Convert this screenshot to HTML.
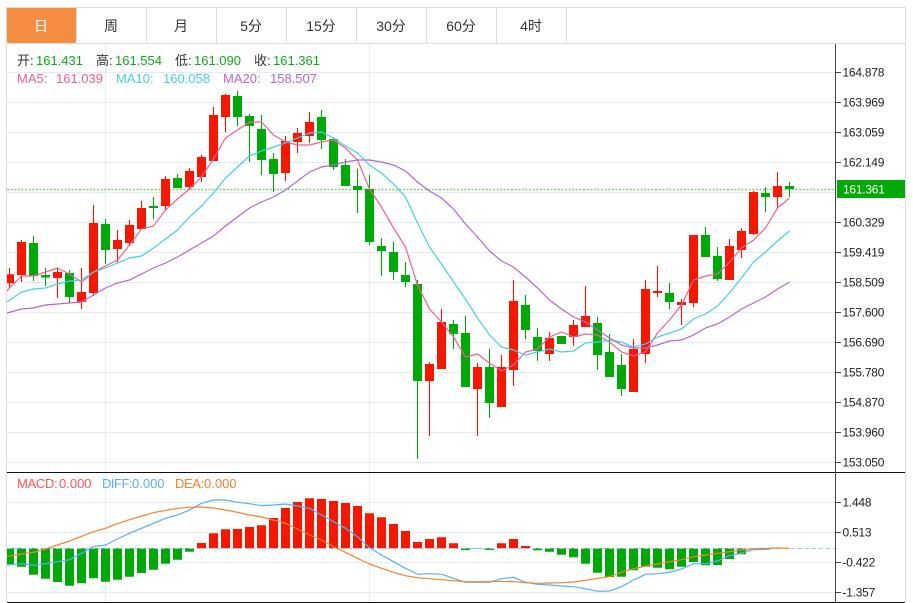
<!DOCTYPE html>
<html><head><meta charset="utf-8"><style>
html,body{margin:0;padding:0;background:#fff;width:913px;height:603px;overflow:hidden}
svg{display:block}
text{font-family:"Liberation Sans","Noto Sans CJK SC",sans-serif}
</style></head><body>
<svg width="913" height="603" viewBox="0 0 913 603" xmlns="http://www.w3.org/2000/svg">
<defs><clipPath id="c"><rect x="7" y="44" width="828" height="558"/></clipPath></defs>
<!-- frame -->
<path d="M6.5 603V7.5H905.5V603" fill="none" stroke="#ddd"/>
<path d="M7 43.5H905" stroke="#ddd"/>
<path d="M76.5 8V43M146.5 8V43M216.5 8V43M286.5 8V43M356.5 8V43M426.5 8V43M496.5 8V43M566.5 8V43" stroke="#ddd"/>
<path d="M7 8H76V41a2 2 0 0 1-2 2H9a2 2 0 0 1-2-2Z" fill="#f48d42"/>
<g font-size="14" text-anchor="middle" fill="#333">
<text x="41" y="31" fill="#fff">日</text><text x="111" y="31">周</text><text x="181" y="31">月</text><text x="251" y="31">5分</text><text x="321" y="31">15分</text><text x="391" y="31">30分</text><text x="461" y="31">60分</text><text x="531" y="31">4时</text>
</g>
<!-- grid -->
<path d="M7 72.5H835M7 102.5H835M7 132.5H835M7 162.5H835M7 192.5H835M7 222.5H835M7 252.5H835M7 282.5H835M7 312.5H835M7 342.5H835M7 372.5H835M7 402.5H835M7 432.5H835M7 462.5H835M7 502.5H835M7 532.5H835M7 562.5H835M7 592.5H835M105.5 44V472M369.5 44V472M105.5 473V602M369.5 473V602" stroke="#e3ecf3" fill="none" stroke-width="1.1"/>
<!-- last price line -->
<path d="M7 189.5H835" stroke="#75d275" stroke-width="1.4" stroke-dasharray="2 1.6"/>
<g clip-path="url(#c)">
<!-- wicks -->
<path fill="none" stroke="#e8180c" stroke-width="1.1" d="M9.5 268V288M21.5 240V282M57.5 268V298M81.5 268V309M93.5 205V296M117.5 230V263M129.5 220V246M141.5 201V229M165.5 176V210M189.5 168V190M201.5 155V182M213.5 107V161M225.5 94V132M285.5 136V181M297.5 128V153M309.5 112V143M429.5 362V436M441.5 309V369M477.5 363V436M501.5 355V407M513.5 280V386M549.5 332V361M573.5 320V346M585.5 286V327M633.5 339V392M645.5 280V363M657.5 266V297M681.5 299V325M693.5 235V307M729.5 239V280M741.5 228V258M753.5 191V235M777.5 172V207"/>
<path fill="none" stroke="#0a9c12" stroke-width="1.1" d="M33.5 236V281M45.5 268V286M69.5 270V303M105.5 219V264M153.5 197V219M177.5 174V188M237.5 91V126M249.5 114V162M261.5 115V175M273.5 153V192M321.5 110V149M333.5 137V170M345.5 159V186M357.5 169V213M369.5 175V245M381.5 238V276M393.5 242V280M405.5 262V287M417.5 280V459M453.5 320V349M465.5 316V387M489.5 349V418M525.5 295V339M537.5 328V361M597.5 317V370M609.5 334V377M621.5 354V396M669.5 283V309M705.5 227V257M717.5 247V281M765.5 187V212M789.5 182V197"/>
<!-- bodies -->
<path fill="none" stroke="#f41800" stroke-width="9" d="M9.5 274.3V283.3M21.5 242V275M57.5 272V278M81.5 292V302M93.5 223V293M117.5 240V249M129.5 225V243M141.5 208V229M165.5 179V206M189.5 171V187M201.5 157V177M213.5 115V161M225.5 95V117M285.5 141V173M297.5 133V142M309.5 122V136M429.5 364V381M441.5 322V369M477.5 367V389M501.5 367V407M513.5 301V370M549.5 338V354M573.5 325V337M585.5 316V327M633.5 349V392M645.5 289V354M657.5 291V293M681.5 302V305M693.5 235V303M729.5 246V280M741.5 231V250M753.5 192V234M777.5 186V197"/>
<path fill="none" stroke="#00a808" stroke-width="9" d="M33.5 243V276M45.5 275V277.5M69.5 273V297M105.5 224V250M153.5 206V208M177.5 178V188M237.5 96V117M249.5 116V126M261.5 129V160M273.5 159V174M321.5 117V140M333.5 139V167M345.5 165V186M357.5 186V190M369.5 189V242M381.5 246V251M393.5 252V272M405.5 275V282M417.5 284V381M453.5 324V334M465.5 333V387M489.5 367V403M525.5 305V330M537.5 337V351M561.5 336V344M597.5 323V355M609.5 352V377M621.5 365V389M669.5 293V302M705.5 235V257M717.5 256V279M765.5 193V197M789.5 186V189"/>
<!-- MA lines -->
<polyline fill="none" stroke="#f0608f" stroke-width="1.2" points="7,291 9.5,288 21.5,276 33.5,276 45.5,272 57.5,268 69.5,274 81.5,282 93.5,272 105.5,266 117.5,260 129.5,245 141.5,229 153.5,226 165.5,210 177.5,199 189.5,189 201.5,177 213.5,159 225.5,138 237.5,130 249.5,122 261.5,122 273.5,135 285.5,142 297.5,145 309.5,145 321.5,142 333.5,140 345.5,148 357.5,160 369.5,189 381.5,207 393.5,228 405.5,247 417.5,285 429.5,309 441.5,322 453.5,337 465.5,357 477.5,354 489.5,363 501.5,371 513.5,365 525.5,352 537.5,349 549.5,337 561.5,332 573.5,337 585.5,334 597.5,335 609.5,342 621.5,352 633.5,356 645.5,352 657.5,333 669.5,320 681.5,305 693.5,280 705.5,276 717.5,274 729.5,262 741.5,248 753.5,240 765.5,228 777.5,208 789.5,198"/>
<polyline fill="none" stroke="#46cfe3" stroke-width="1.2" points="7,302 21.5,292 33.5,289 45.5,288 57.5,284 69.5,281 81.5,280 93.5,272 105.5,268 117.5,263 129.5,258 141.5,256 153.5,248 165.5,239 177.5,230 189.5,217 201.5,206 213.5,193 225.5,178 237.5,167 249.5,156 261.5,151 273.5,147 285.5,143 297.5,138 309.5,133 321.5,132 333.5,138 345.5,146 357.5,153 369.5,165 381.5,173 393.5,184 405.5,197 417.5,223 429.5,247 441.5,264 453.5,282 465.5,299 477.5,318 489.5,335 501.5,347 513.5,350 525.5,355 537.5,352 549.5,349 561.5,352 573.5,351 585.5,343 597.5,342 609.5,340 621.5,342 633.5,347 645.5,344 657.5,337 669.5,333 681.5,329 693.5,319 705.5,314 717.5,306 729.5,293 741.5,278 753.5,262 765.5,252 777.5,241 789.5,231"/>
<polyline fill="none" stroke="#b766d0" stroke-width="1.2" points="7,313 21.5,309 33.5,308 45.5,305 57.5,304 69.5,303 81.5,302 93.5,295 105.5,288 117.5,283 129.5,280 141.5,274 153.5,268 165.5,263 177.5,257 189.5,250 201.5,243 213.5,236 225.5,226 237.5,217 249.5,208 261.5,202 273.5,197 285.5,190 297.5,181 309.5,172 321.5,167 333.5,165 345.5,162 357.5,160 369.5,160 381.5,162 393.5,165 405.5,171 417.5,182 429.5,191 441.5,198 453.5,209 465.5,224 477.5,237 489.5,251 501.5,261 513.5,267 525.5,277 537.5,288 549.5,300 561.5,309 573.5,317 585.5,322 597.5,330 609.5,338 621.5,345 633.5,348 645.5,348 657.5,345 669.5,341 681.5,340 693.5,335 705.5,328 717.5,324 729.5,317 741.5,309 753.5,303 765.5,297 777.5,289 789.5,282"/>
<!-- MACD bars -->
<path fill="none" stroke="#00a808" stroke-width="9" d="M9.5 548.3V564.3M21.5 548.3V566.7M33.5 548.3V574.7M45.5 548.3V578.7M57.5 548.3V582M69.5 548.3V585.7M81.5 548.3V583.3M93.5 548.3V578.3M105.5 548.3V581.7M117.5 548.3V579.7M129.5 548.3V576.7M141.5 548.3V573M153.5 548.3V569.7M165.5 548.3V563.7M177.5 548.3V559.7M189.5 548.3V551.7M465.5 548.3V550M477.5 548.3V548.8M489.5 548.3V550M537.5 548.3V550.3M549.5 548.3V551.7M561.5 548.3V554.7M573.5 548.3V557.3M585.5 548.3V563.7M597.5 548.3V572.7M609.5 548.3V577M621.5 548.3V576.7M633.5 548.3V570.3M645.5 548.3V566.7M657.5 548.3V567.7M669.5 548.3V569.3M681.5 548.3V566.7M693.5 548.3V562M705.5 548.3V565.3M717.5 548.3V565M729.5 548.3V559M741.5 548.3V554.3"/>
<path fill="none" stroke="#f41800" stroke-width="9" d="M201.5 548.3V543M213.5 548.3V533.3M225.5 548.3V529.3M237.5 548.3V529M249.5 548.3V527M261.5 548.3V525.3M273.5 548.3V518M285.5 548.3V508M297.5 548.3V502M309.5 548.3V498.3M321.5 548.3V499M333.5 548.3V501M345.5 548.3V503M357.5 548.3V506M369.5 548.3V513.3M381.5 548.3V517.3M393.5 548.3V524M405.5 548.3V531M417.5 548.3V542M429.5 548.3V539M441.5 548.3V537.3M453.5 548.3V543.3M501.5 548.3V543.3M513.5 548.3V539M525.5 548.3V546"/>
<path d="M7 548.5H835" stroke="#9fc9de" stroke-width="1" stroke-dasharray="4 3"/>
<polyline fill="none" stroke="#5aaef5" stroke-width="1.2" points="7,565 21.5,563.7 33.5,565.3 45.5,563.7 57.5,561.7 69.5,559.7 81.5,553.3 93.5,546.7 105.5,545 117.5,539 129.5,533.3 141.5,528.3 153.5,523.3 165.5,518.3 177.5,515 189.5,510 201.5,503.3 213.5,500 225.5,500 237.5,502.3 249.5,503.7 261.5,505.7 273.5,505 285.5,504 297.5,506 309.5,508.3 321.5,515 333.5,521.7 345.5,528.3 357.5,536.7 369.5,547.7 381.5,555 393.5,561.7 405.5,568.3 417.5,574.3 429.5,573.7 441.5,574.3 453.5,578.3 465.5,582.3 477.5,582.3 489.5,582.3 501.5,578.7 513.5,577.3 525.5,582.3 537.5,584.3 549.5,585 561.5,586 573.5,586.7 585.5,588.7 597.5,591.3 609.5,591 621.5,586.7 633.5,580 645.5,574.3 657.5,573.7 669.5,572.3 681.5,569 693.5,563.7 705.5,563.7 717.5,561 729.5,555.7 741.5,553 753.5,549.7 770,549.3"/>
<polyline fill="none" stroke="#f5822a" stroke-width="1.2" points="7,556.3 21.5,554 33.5,552.3 45.5,549 57.5,545 69.5,541 81.5,536.3 93.5,531.7 105.5,528.3 117.5,523.7 129.5,519.7 141.5,516 153.5,512.7 165.5,510.3 177.5,508.3 189.5,507.3 201.5,507 213.5,508 225.5,510 237.5,512.3 249.5,515 261.5,517 273.5,520 285.5,523.3 297.5,529 309.5,535 321.5,540 333.5,546.7 345.5,552.3 357.5,558.3 369.5,564 381.5,568.3 393.5,572.3 405.5,575.7 417.5,577.7 429.5,578.7 441.5,579.7 453.5,580.7 465.5,581.7 477.5,581.7 489.5,581.7 501.5,581.3 513.5,581.7 525.5,582.7 537.5,583.3 549.5,583 561.5,582.7 573.5,582 585.5,580.3 597.5,578.3 609.5,576.7 621.5,572.3 633.5,568.7 645.5,566 657.5,564 669.5,561.7 681.5,559.7 693.5,556.7 705.5,555 717.5,553.3 729.5,551.7 741.5,550 753.5,548.7 765.5,548.3 777.5,548 789.5,548.3"/>
</g>
<!-- panels / axis -->
<path d="M7 472.5H905M7 602.5H905" stroke="#111"/>
<path d="M835.5 44V602" stroke="#444"/>
<path d="M836 72.5H841M836 102.5H841M836 132.5H841M836 162.5H841M836 222.5H841M836 252.5H841M836 282.5H841M836 312.5H841M836 342.5H841M836 372.5H841M836 402.5H841M836 432.5H841M836 462.5H841M836 502.5H841M836 532.5H841M836 562.5H841M836 592.5H841" stroke="#444"/>
<g font-size="12" fill="#222" letter-spacing="-.25">
<text x="842.5" y="76.5">164.878</text><text x="842.5" y="106.5">163.969</text><text x="842.5" y="136.5">163.059</text><text x="842.5" y="166.5">162.149</text><text x="842.5" y="226.5">160.329</text><text x="842.5" y="256.5">159.419</text><text x="842.5" y="286.5">158.509</text><text x="842.5" y="316.5">157.600</text><text x="842.5" y="346.5">156.690</text><text x="842.5" y="376.5">155.780</text><text x="842.5" y="406.5">154.870</text><text x="842.5" y="436.5">153.960</text><text x="842.5" y="466.5">153.050</text>
<text x="842.5" y="506.5">1.448</text><text x="842.5" y="536.5">0.513</text><text x="842.5" y="566.5">-0.422</text><text x="842.5" y="596.5">-1.357</text>
</g>
<rect x="837" y="180" width="68" height="18" fill="#00a808"/>
<text x="843" y="193.5" font-size="12" fill="#fff" letter-spacing="-.25">161.361</text>
<!-- legends -->
<g font-size="13">
<text x="17" y="65" fill="#333">开:</text><text x="36" y="65" fill="#10a81a">161.431</text>
<text x="96" y="65" fill="#333">高:</text><text x="115" y="65" fill="#10a81a">161.554</text>
<text x="175" y="65" fill="#333">低:</text><text x="194" y="65" fill="#10a81a">161.090</text>
<text x="254" y="65" fill="#333">收:</text><text x="273" y="65" fill="#10a81a">161.361</text>
<text x="17" y="83" fill="#f0608f">MA5:</text><text x="56" y="83" fill="#f0608f">161.039</text>
<text x="116" y="83" fill="#46cfe3">MA10:</text><text x="163" y="83" fill="#46cfe3">160.058</text>
<text x="223" y="83" fill="#b766d0">MA20:</text><text x="270" y="83" fill="#b766d0">158.507</text>
<text x="17" y="488" fill="#f55" letter-spacing="-.3">MACD:</text><text x="59" y="488" fill="#f55">0.000</text>
<text x="102" y="488" fill="#5aaef5" letter-spacing="-.5">DIFF:</text><text x="132" y="488" fill="#5aaef5">0.000</text>
<text x="175" y="488" fill="#f5822a" letter-spacing="-.4">DEA:</text><text x="204" y="488" fill="#f5822a">0.000</text>
</g>
</svg>
</body></html>
